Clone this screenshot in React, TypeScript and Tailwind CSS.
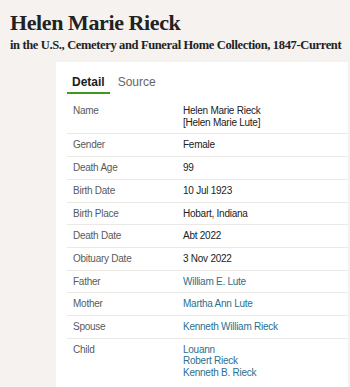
import React from "react";

type Row = { label: string; values: string[]; link?: boolean };

const rows: Row[] = [
  { label: "Name", values: ["Helen Marie Rieck", "[Helen Marie Lute]"] },
  { label: "Gender", values: ["Female"] },
  { label: "Death Age", values: ["99"] },
  { label: "Birth Date", values: ["10 Jul 1923"] },
  { label: "Birth Place", values: ["Hobart, Indiana"] },
  { label: "Death Date", values: ["Abt 2022"] },
  { label: "Obituary Date", values: ["3 Nov 2022"] },
  { label: "Father", values: ["William E. Lute"], link: true },
  { label: "Mother", values: ["Martha Ann Lute"], link: true },
  { label: "Spouse", values: ["Kenneth William Rieck"], link: true },
  { label: "Child", values: ["Louann", "Robert Rieck", "Kenneth B. Rieck"], link: true },
];

export default function App() {
  return (
    <div className="h-[387px] w-[350px] overflow-hidden bg-[#f5f2ef]">
      <div className="px-[10px] pt-[10px] font-['Liberation_Serif',serif] text-[#222]">
        <h1 className="text-[22px] font-bold leading-[26px] tracking-[-0.4px]">Helen Marie Rieck</h1>
        <p className="mt-[2px] text-[12.5px] font-bold leading-[15px] tracking-[-0.36px] whitespace-nowrap">
          in the U.S., Cemetery and Funeral Home Collection, 1847-Current
        </p>
      </div>
      <div className="ml-[56px] mr-[2px] mt-[9px] h-full bg-white pl-[11px] pt-[13px] font-['Liberation_Sans',sans-serif]">
        <div className="flex text-[12px] leading-[14px]">
          <div className="border-b-2 border-[#3d9a1e] px-[5px] pb-[3px] font-bold text-[#1c1c1c]">
            Detail
          </div>
          <div className="ml-[3px] px-[5px] text-[#666]">Source</div>
        </div>
        <div className="mt-[6px] text-[10px] leading-[11.7px] tracking-[-0.25px]">
          {rows.map((r, i) => (
            <div
              key={r.label}
              className={`flex px-[6px] py-[5px] ${i < rows.length - 1 ? "border-b border-[#ebe8e5]" : ""}`}
            >
              <div className="w-[110px] shrink-0 text-[#5a5a5a]">{r.label}</div>
              <div className="flex flex-col">
                {r.values.map((v) => (
                  <span key={v} className={r.link ? "text-[#2b6f8f]" : "text-[#222]"}>
                    {v}
                  </span>
                ))}
              </div>
            </div>
          ))}
        </div>
      </div>
    </div>
  );
}
